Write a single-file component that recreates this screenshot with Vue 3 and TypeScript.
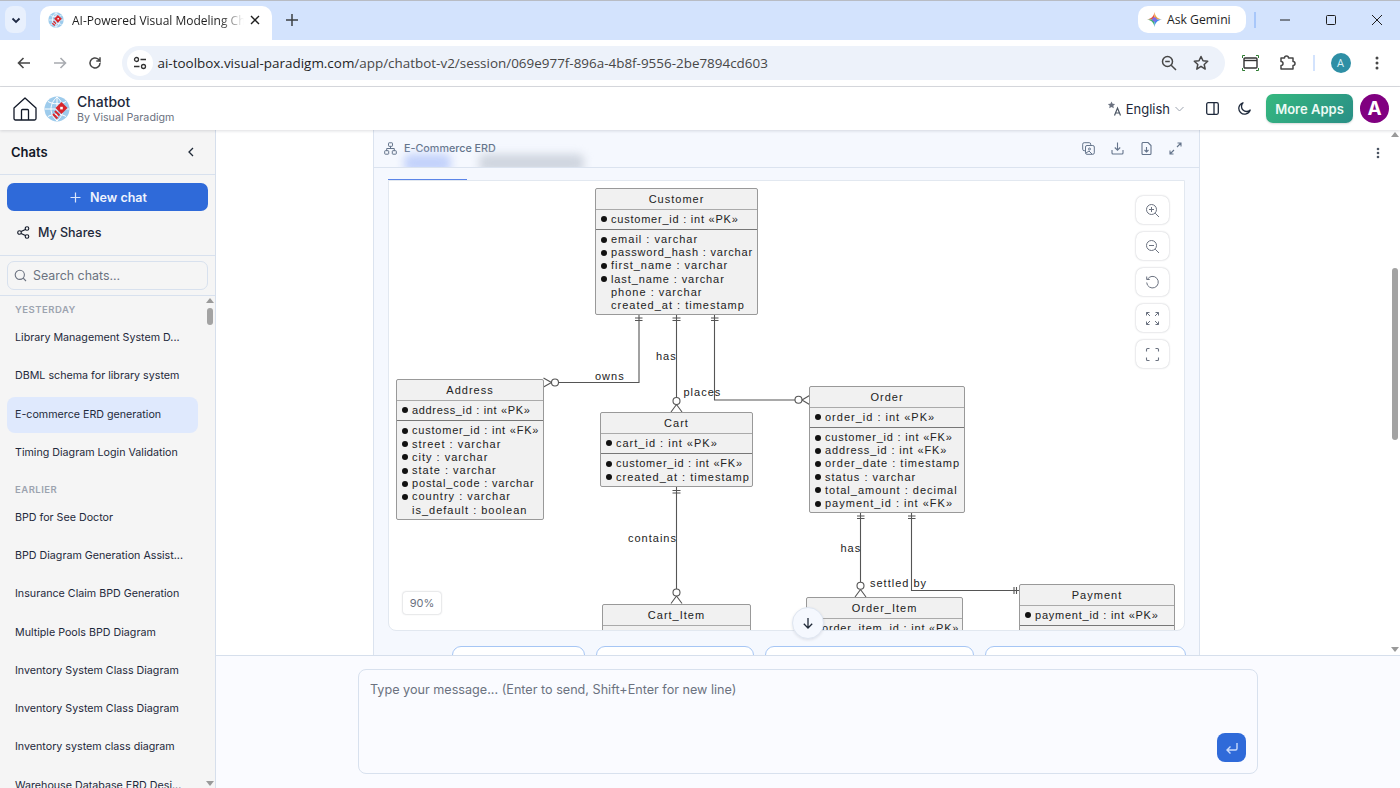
<script setup lang="ts">
type Row = { text: string; key?: boolean; sp?: number };
type Entity = { name: string; x: number; y: number; w: number; pk: string; pkSp?: number; rows: Row[] };

// sp = letter spacing for rows the diagram renderer packed tighter than the rest
const entities: Entity[] = [
  {
    name: "Customer", x: 206, y: 7, w: 163, pk: "customer_id : int «PK»", pkSp: 0.77,
    rows: [
      { text: "email : varchar", key: true },
      { text: "password_hash : varchar", key: true, sp: 0.83 },
      { text: "first_name : varchar", key: true },
      { text: "last_name : varchar", key: true, sp: 0.9 },
      { text: "phone : varchar" },
      { text: "created_at : timestamp" },
    ],
  },
  {
    name: "Address", x: 7, y: 198.4, w: 148, pk: "address_id : int «PK»", pkSp: 0.67,
    rows: [
      { text: "customer_id : int «FK»", key: true, sp: 0.78 },
      { text: "street : varchar", key: true },
      { text: "city : varchar", key: true },
      { text: "state : varchar", key: true },
      { text: "postal_code : varchar", key: true, sp: 0.82 },
      { text: "country : varchar", key: true },
      { text: "is_default : boolean" },
    ],
  },
  {
    name: "Cart", x: 211, y: 231.4, w: 153, pk: "cart_id : int «PK»",
    rows: [
      { text: "customer_id : int «FK»", key: true, sp: 0.76 },
      { text: "created_at : timestamp", key: true },
    ],
  },
  {
    name: "Order", x: 420, y: 205, w: 156, pk: "order_id : int «PK»",
    rows: [
      { text: "customer_id : int «FK»", key: true, sp: 0.8 },
      { text: "address_id : int «FK»", key: true, sp: 0.87 },
      { text: "order_date : timestamp", key: true },
      { text: "status : varchar", key: true },
      { text: "total_amount : decimal", key: true },
      { text: "payment_id : int «FK»", key: true },
    ],
  },
  { name: "Cart_Item", x: 213, y: 423, w: 149, pk: "cart_item_id : int «PK»", rows: [] },
  { name: "Order_Item", x: 417, y: 416, w: 157, pk: "order_item_id : int «PK»", pkSp: 0.8, rows: [] },
  { name: "Payment", x: 630, y: 403, w: 156, pk: "payment_id : int «PK»", pkSp: 0.76, rows: [] },
];

const chats = [
  { label: "YESTERDAY" },
  { title: "Library Management System D..." },
  { title: "DBML schema for library system" },
  { title: "E-commerce ERD generation", active: true },
  { title: "Timing Diagram Login Validation" },
  { label: "EARLIER" },
  { title: "BPD for See Doctor" },
  { title: "BPD Diagram Generation Assist..." },
  { title: "Insurance Claim BPD Generation" },
  { title: "Multiple Pools BPD Diagram" },
  { title: "Inventory System Class Diagram" },
  { title: "Inventory System Class Diagram" },
  { title: "Inventory system class diagram" },
  { title: "Warehouse Database ERD Desi..." },
];

const chipWidths = [133, 158, 209, 201];

function spacing(sp?: number) {
  return sp ? { letterSpacing: sp + "px" } : undefined;
}
</script>

<template>
  <div class="window">
    <div class="tabstrip">
      <button class="tablist">
        <svg width="12" height="12" viewBox="0 0 12 12"><path d="M2.5 4.5 6 8l3.5-3.5" fill="none" stroke="#1f2a44" stroke-width="1.8" /></svg>
      </button>
      <div class="tab">
        <svg class="favicon" width="16" height="16" viewBox="0 0 26 26">
          <circle cx="13" cy="13" r="12.5" fill="#9dcbec" />
          <path d="M1 13h24M13 1v24M4 5.500c5 3 13 3 18 0M4 20.500c5-3 13-3 18 0M13 1C5 8 5 18 13 25M13 1c8 7 8 17 0 24" fill="none" stroke="#fff" stroke-width="1.2" />
          <path d="M16 5l6.500 6-6.500 6.500-6-6.500z" fill="#d8262c" />
          <path d="M15.300 9.700h2.400v2.400h-2.400z" fill="#fff" />
          <path d="M9 15l4 4M7 18l4 4" stroke="#d8262c" stroke-width="2" />
        </svg>
        <span class="tab-title">AI-Powered Visual Modeling Chatbot</span>
        <svg class="tab-close" width="10" height="10" viewBox="0 0 10 10"><path d="M1 1l8 8M9 1 1 9" stroke="#1f1f1f" stroke-width="1.4" /></svg>
      </div>
      <svg class="newtab" width="12" height="12" viewBox="0 0 12 12"><path d="M6 0v12M0 6h12" stroke="#3c4043" stroke-width="1.5" /></svg>
      <div class="strip-space"></div>
      <div class="gemini">
        <svg width="15" height="15" viewBox="0 0 16 16">
          <defs>
            <clipPath id="spark"><path d="M8 0c.6 4.400 3.200 7.200 8 8-4.800.8-7.400 3.600-8 8-.6-4.400-3.200-7.200-8-8 4.800-.8 7.400-3.600 8-8z" /></clipPath>
          </defs>
          <g clip-path="url(#spark)">
            <rect width="8" height="8" fill="#e8503f" />
            <rect x="8" width="8" height="8" fill="#f0a93a" />
            <rect y="8" width="8" height="8" fill="#3fb66b" />
            <rect x="8" y="8" width="8" height="8" fill="#3d8bf0" />
            <circle cx="8" cy="8" r="2.500" fill="#7f6ae8" />
          </g>
        </svg>
        <span>Ask Gemini</span>
      </div>
      <div class="strip-sep"></div>
      <div class="winctl">
        <svg width="12" height="12" viewBox="0 0 12 12"><path d="M1 6h10" stroke="#1f1f1f" stroke-width="1" /></svg>
        <svg width="12" height="12" viewBox="0 0 12 12"><rect x="1.5" y="1.5" width="9" height="9" rx="1" fill="none" stroke="#1f1f1f" stroke-width="1" /></svg>
        <svg width="12" height="12" viewBox="0 0 12 12"><path d="M1 1l10 10M11 1 1 11" stroke="#1f1f1f" stroke-width="1" /></svg>
      </div>
    </div>

    <div class="toolbar">
      <svg class="nav" width="16" height="16" viewBox="0 0 16 16"><path d="M14 8H2.5M7.5 3l-5 5 5 5" fill="none" stroke="#474747" stroke-width="1.6" /></svg>
      <svg class="nav" width="16" height="16" viewBox="0 0 16 16"><path d="M2 8h11.5M8.5 3l5 5-5 5" fill="none" stroke="#a8abb0" stroke-width="1.6" /></svg>
      <svg class="nav" width="16" height="16" viewBox="0 0 16 16"><path d="M13 8a5 5 0 1 1-1.6-3.7L13 6V2.2M13 6H9.3" fill="none" stroke="#474747" stroke-width="1.5" /></svg>
      <div class="omnibox">
        <span class="siteinfo">
          <svg width="14" height="14" viewBox="0 0 14 14"><circle cx="3.5" cy="3.5" r="2" fill="none" stroke="#333" stroke-width="1.3" /><path d="M7.5 3.5H13M1 10.5h5.5" stroke="#333" stroke-width="1.3" /><circle cx="10.5" cy="10.5" r="2" fill="none" stroke="#333" stroke-width="1.3" /></svg>
        </span>
        <span class="url"><span class="host">ai-toolbox.visual-paradigm.com</span>/app/chatbot-v2/session/069e977f-896a-4b8f-9556-2be7894cd603</span>
        <svg class="omni-zoom" width="16" height="16" viewBox="0 0 16 16"><circle cx="6.5" cy="6.5" r="5" fill="none" stroke="#474747" stroke-width="1.5" /><path d="M4.2 6.5h4.6M10.2 10.2 15 15" stroke="#474747" stroke-width="1.5" /></svg>
        <svg class="omni-star" width="16" height="16" viewBox="0 0 16 16"><path d="M8 1.5l2 4.3 4.7.5-3.5 3.2 1 4.6L8 11.3l-4.2 2.8 1-4.6L1.300 6.300l4.700-.5z" fill="none" stroke="#474747" stroke-width="1.5" stroke-linejoin="round" /></svg>
      </div>
      <svg class="capture" width="17" height="16" viewBox="0 0 17 16">
        <path d="M.5 3V.5H3M14 .5h2.500V3M.5 13v2.500H3M14 15.500h2.500V13" fill="none" stroke="#2f7d32" stroke-width="1" />
        <rect x="2" y="3" width="13" height="10" rx="1" fill="none" stroke="#333" stroke-width="1.400" />
        <path d="M2 5.500h13" stroke="#333" stroke-width="1.400" />
      </svg>
      <svg class="puzzle" width="17" height="17" viewBox="0 0 17 17"><path d="M2 4h3.500a2 2 0 0 1 4 0H14v3.500a2 2 0 0 1 0 4V15H2v-3.500a2 2 0 0 0 0-4z" fill="none" stroke="#474747" stroke-width="1.500" stroke-linejoin="round" /></svg>
      <div class="tool-sep"></div>
      <span class="profile">A</span>
      <svg class="chrome-kebab" width="4" height="14" viewBox="0 0 4 14"><circle cx="2" cy="2" r="1.500" fill="#474747" /><circle cx="2" cy="7" r="1.500" fill="#474747" /><circle cx="2" cy="12" r="1.500" fill="#474747" /></svg>
    </div>

    <header class="apphead">
      <svg class="home" width="24" height="24" viewBox="0 0 24 24"><path d="M1 11 12 1l11 10v10.500a1.500 1.500 0 0 1-1.500 1.500h-19A1.500 1.500 0 0 1 1 21.500zM8.500 23V13.500a1 1 0 0 1 1-1h5a1 1 0 0 1 1 1V23" fill="none" stroke="#111827" stroke-width="1.300" stroke-linejoin="round" /></svg>
      <svg class="logo" width="26" height="26" viewBox="0 0 26 26">
        <circle cx="13" cy="13" r="12.500" fill="#9dcbec" />
        <path d="M1 13h24M13 1v24M4 5.500c5 3 13 3 18 0M4 20.500c5-3 13-3 18 0M13 1C5 8 5 18 13 25M13 1c8 7 8 17 0 24" fill="none" stroke="#fff" stroke-width="1" />
        <path d="M17.500 6l6 6-6 6-6-6z" fill="#d8262c" />
        <path d="M16.200 10.800h2.600v2.600h-2.600z" fill="#fff" />
        <path d="M11 15l4.500 4.500M9 18l4.500 4.500" stroke="#d8262c" stroke-width="2" />
      </svg>
      <div class="brand">
        <div class="brand-name">Chatbot</div>
        <div class="brand-sub">By Visual Paradigm</div>
      </div>
      <div class="head-right">
        <svg class="translate" width="15" height="15" viewBox="0 0 15 15">
          <path d="M4.500 .5l1.100 2.300 2.500.3-1.800 1.700.5 2.500-2.300-1.200-2.300 1.200.5-2.500L.900 3.100l2.500-.3z" fill="#6b7280" />
          <path d="M7.500 14.500 10.500 7l3 7.500M8.500 12h4" fill="none" stroke="#4b5563" stroke-width="1.200" />
        </svg>
        <span class="lang">English</span>
        <svg class="lang-chev" width="9" height="6" viewBox="0 0 9 6"><path d="M.5 1l4 4 4-4" fill="none" stroke="#9ca3af" stroke-width="1" /></svg>
        <svg class="panel-ic" width="13" height="13" viewBox="0 0 13 13"><rect x=".7" y=".7" width="11.600" height="11.600" rx="1.500" fill="none" stroke="#1e293b" stroke-width="1.300" /><path d="M8 .7v11.600" stroke="#1e293b" stroke-width="1.300" /></svg>
        <svg class="moon" width="13" height="13" viewBox="0 0 13 13"><path d="M5 .8a5.800 5.800 0 1 0 7.200 7.200A5 5 0 0 1 5 .8z" fill="none" stroke="#1e293b" stroke-width="1.300" stroke-linejoin="round" /></svg>
        <button class="more-apps">More Apps</button>
        <span class="avatar">A</span>
      </div>
    </header>

    <div class="main">
      <aside class="sidebar">
        <div class="side-head">
          <span>Chats</span>
          <svg width="8" height="10" viewBox="0 0 8 10"><path d="M6 1 2 5l4 4" fill="none" stroke="#1f2937" stroke-width="1.300" /></svg>
        </div>
        <div class="side-actions">
          <button class="new-chat">
            <svg width="11" height="11" viewBox="0 0 11 11"><path d="M5.500 .5v10M.5 5.500h10" stroke="#dbe6fb" stroke-width="1.200" /></svg>
            <span>New chat</span>
          </button>
          <div class="shares">
            <svg width="13" height="13" viewBox="0 0 13 13" fill="none" stroke="#111827" stroke-width="1.100"><circle cx="2.500" cy="6.500" r="1.800" /><circle cx="10" cy="2.500" r="1.800" /><circle cx="10" cy="10.500" r="1.800" /><path d="M4.100 5.600 8.400 3.400M4.100 7.400l4.300 2.200" /></svg>
            <span>My Shares</span>
          </div>
        </div>
        <div class="side-search">
          <div class="search-box">
            <svg width="13" height="13" viewBox="0 0 13 13" fill="none" stroke="#6b7280" stroke-width="1.100"><circle cx="5.800" cy="5.800" r="4.600" /><path d="M9.200 9.200 12 12" /></svg>
            <span>Search chats...</span>
          </div>
        </div>
        <div class="side-list">
          <div class="list-body">
            <template v-for="c in chats" :key="(c.label ?? '') + (c.title ?? '')">
              <div v-if="c.label" class="group-label">{{ c.label }}</div>
              <div v-else class="chat-item" :class="{ active: c.active }">{{ c.title }}</div>
            </template>
          </div>
          <div class="scrollbar small">
            <span class="arrow up"></span>
            <span class="thumb"></span>
            <span class="arrow down"></span>
          </div>
        </div>
      </aside>

      <section class="chat">
        <div class="messages">
          <div class="card">
            <div class="card-head">
              <svg width="13" height="13" viewBox="0 0 13 13" fill="none" stroke="#64748b" stroke-width="1"><rect x="4.500" y=".8" width="4" height="3.500" rx=".6" /><rect x=".7" y="8.700" width="4" height="3.500" rx=".6" /><rect x="8.300" y="8.700" width="4" height="3.500" rx=".6" /><path d="M6.500 4.300v2.200M2.700 8.700V6.500h7.600v2.200" /></svg>
              <span class="card-title">E-Commerce ERD</span>
              <div class="card-tools">
                <svg width="13" height="13" viewBox="0 0 13 13" fill="none" stroke="#64748b" stroke-width="1"><rect x=".7" y=".7" width="8" height="8" rx="1.500" /><rect x="3.500" y="3.500" width="8.800" height="8.800" rx="1.500" fill="#f5f8fe" /><circle cx="7.500" cy="7" r="1" /><path d="M4 11l3-2 3 3" /></svg>
                <svg width="13" height="13" viewBox="0 0 13 13" fill="none" stroke="#64748b" stroke-width="1.100"><path d="M6.500 .5v7.500M3.800 5.500l2.700 2.700 2.700-2.700M1 8v3a1 1 0 0 0 1 1h9a1 1 0 0 0 1-1V8" /></svg>
                <svg width="13" height="13" viewBox="0 0 13 13" fill="none" stroke="#64748b" stroke-width="1.100"><path d="M2 1.500a1 1 0 0 1 1-1h5l3 3v8a1 1 0 0 1-1 1H3a1 1 0 0 1-1-1zM6.500 5v5M4.500 8l2 2 2-2" /></svg>
                <svg width="13" height="13" viewBox="0 0 13 13" fill="none" stroke="#64748b" stroke-width="1.100"><path d="M8 5l4-4M8.500 1H12v3.500M5 8l-4 4M1 8.500V12h3.500" /></svg>
              </div>
              <span class="blur-tab one"></span>
              <span class="blur-tab two"></span>
            </div>
            <div class="card-body">
              <div class="tabs-line"><span class="tab-active"></span></div>
              <div class="canvas">
                <svg class="wires" width="795" height="449" viewBox="389 181 795 449">
                  <g fill="none" stroke="#555" stroke-width="1.100">
                    <path d="M639 314v68.500H558.500" />
                    <path d="M635 318h7.500M635 320.500h7.500" />
                    <circle cx="555" cy="382.500" r="3.500" fill="#fff" />
                    <path d="M551.500 382.500 543.500 378M551.500 382.500l-8 4.500" />

                    <path d="M676.500 314v83.500" />
                    <path d="M672.500 318h8M672.500 320.500h8" />
                    <circle cx="676.500" cy="401" r="3.500" fill="#fff" />
                    <path d="M676.500 404.500 671 412M676.500 404.500 682 412" />

                    <path d="M714.500 314v86h81" />
                    <path d="M711 318h7.500M711 320.500h7.500" />
                    <circle cx="798.500" cy="399.800" r="3.500" fill="#fff" />
                    <path d="M802 400l7.500-4.500M802 400l7.500 4.500" />

                    <path d="M676.500 487v102" />
                    <path d="M672.500 490.500h8M672.500 493h8" />
                    <circle cx="676.500" cy="592.500" r="3.500" fill="#fff" />
                    <path d="M676.500 596 671 603.500M676.500 596l5.500 7.500" />

                    <path d="M860.500 513v69" />
                    <path d="M857 516h7.500M857 518.500h7.500" />
                    <circle cx="860.500" cy="585.700" r="3.500" fill="#fff" />
                    <path d="M860.500 589.500 855 597M860.500 589.500l5.500 7.500" />

                    <path d="M911.500 513v77.500H1019" />
                    <path d="M908 516h7.500M908 518.500h7.500" />
                    <path d="M1014 587v7M1016.500 587v7" />
                  </g>
                  <g class="wire-labels">
                    <text x="595" y="379.500">owns</text>
                    <text x="656" y="359.500">has</text>
                    <text x="683.500" y="395.500">places</text>
                    <text x="628" y="541.500">contains</text>
                    <text x="840.500" y="552">has</text>
                    <text x="870" y="586.500">settled by</text>
                  </g>
                </svg>

                <div
                  v-for="e in entities"
                  :key="e.name"
                  class="entity"
                  :style="{ left: e.x + 'px', top: e.y + 'px', width: e.w + 'px' }"
                >
                  <div class="ent-title">{{ e.name }}</div>
                  <div class="ent-pk"><i class="dot"></i><span :style="spacing(e.pkSp)">{{ e.pk }}</span></div>
                  <div class="ent-rows">
                    <div v-for="r in e.rows" :key="r.text" class="ent-row">
                      <i class="dot" :class="{ none: !r.key }"></i><span :style="spacing(r.sp)">{{ r.text }}</span>
                    </div>
                  </div>
                </div>

                <div class="zoom-tools">
                  <button>
                    <svg width="15" height="15" viewBox="0 0 15 15" fill="none" stroke="#6b7280" stroke-width="1"><circle cx="6.500" cy="6.500" r="5" /><path d="M4 6.500h5M6.500 4v5M10.200 10.200 14 14" /></svg>
                  </button>
                  <button>
                    <svg width="15" height="15" viewBox="0 0 15 15" fill="none" stroke="#6b7280" stroke-width="1"><circle cx="6.500" cy="6.500" r="5" /><path d="M4 6.500h5M10.200 10.200 14 14" /></svg>
                  </button>
                  <button>
                    <svg width="15" height="15" viewBox="0 0 15 15" fill="none" stroke="#6b7280" stroke-width="1"><path d="M2.500 4.200A5.800 5.800 0 1 1 1.700 7.500M1.700 1.500v3h3" /></svg>
                  </button>
                  <button>
                    <svg width="15" height="15" viewBox="0 0 15 15" fill="none" stroke="#6b7280" stroke-width="1"><path d="M1.500 1.500l3.500 3.500M1.500 4.500v-3h3M13.500 1.500 10 5M10.500 1.500h3v3M1.500 13.500 5 10M1.500 10.500v3h3M13.500 13.500 10 10M13.500 10.500v3h-3" /></svg>
                  </button>
                  <button>
                    <svg width="15" height="15" viewBox="0 0 15 15" fill="none" stroke="#6b7280" stroke-width="1.100"><path d="M1.500 4.500v-2a1 1 0 0 1 1-1h2M10.500 1.500h2a1 1 0 0 1 1 1v2M13.500 10.500v2a1 1 0 0 1-1 1h-2M4.500 13.500h-2a1 1 0 0 1-1-1v-2" /></svg>
                  </button>
                </div>
                <div class="zoom-level">90%</div>
              </div>
              <div class="chips">
                <span v-for="w in chipWidths" :key="w" class="chip" :style="{ width: w + 'px' }"></span>
              </div>
            </div>
          </div>
          <div class="msg-side">
            <svg width="4" height="12" viewBox="0 0 4 12"><circle cx="2" cy="2" r="1.300" fill="#4b5563" /><circle cx="2" cy="6" r="1.300" fill="#4b5563" /><circle cx="2" cy="10" r="1.300" fill="#4b5563" /></svg>
          </div>
          <div class="scrollbar large">
            <span class="arrow up"></span>
            <span class="thumb"></span>
            <span class="arrow down"></span>
          </div>
          <button class="to-bottom">
            <svg width="12" height="12" viewBox="0 0 12 12" fill="none" stroke="#1f2937" stroke-width="1.300"><path d="M6 1v10M1.800 6.800 6 11l4.200-4.200" /></svg>
          </button>
        </div>
        <div class="composer">
          <div class="input-box">
            <span class="placeholder">Type your message... (Enter to send, Shift+Enter for new line)</span>
            <button class="send">
              <svg width="14" height="14" viewBox="0 0 14 14" fill="none" stroke="#c9dafb" stroke-width="1.400"><path d="M12 2v5.500a1.500 1.500 0 0 1-1.500 1.500H2M5.500 5.500 2 9l3.500 3.500" /></svg>
            </button>
          </div>
        </div>
      </section>
    </div>
  </div>
</template>

<style>
html, body {
  margin: 0;
  background: #fff;
  overflow: hidden;
}
</style>

<style scoped>
.window {
  width: 1400px;
  height: 788px;
  display: flex;
  flex-direction: column;
  overflow: hidden;
  font-family: Inter, "Liberation Sans", sans-serif;
  color: #111827;
}
button {
  border: none;
  padding: 0;
  font: inherit;
}

/* browser chrome */
.tabstrip {
  height: 39px;
  flex: none;
  background: #d3e3fd;
  border-top: 1px solid #b8bcc4;
  display: flex;
  align-items: flex-end;
  font-family: "Open Sans", "Liberation Sans", sans-serif;
}
.tablist {
  width: 21px;
  height: 27px;
  margin: 0 0 7px 5px;
  border-radius: 8px;
  background: #e8f0fd;
  display: flex;
  align-items: center;
  justify-content: center;
}
.tab {
  margin-left: 14px;
  width: 232px;
  height: 34px;
  background: #fff;
  border-radius: 10px 10px 0 0;
  display: flex;
  align-items: center;
  padding: 0 12px 6px 8px;
  box-sizing: border-box;
  font-size: 12px;
  color: #1f1f1f;
}
.favicon {
  flex: none;
}
.tab-title {
  margin-left: 8px;
  flex: 1;
  overflow: hidden;
  white-space: nowrap;
  -webkit-mask-image: linear-gradient(90deg, #000 86%, transparent);
  mask-image: linear-gradient(90deg, #000 86%, transparent);
}
.tab-close {
  flex: none;
  margin-left: 6px;
}
.newtab {
  margin: 0 0 14px 14px;
}
.strip-space {
  flex: 1;
}
.gemini {
  width: 108px;
  height: 27px;
  margin-bottom: 7px;
  border-radius: 10px;
  background: #fff;
  display: flex;
  align-items: center;
  padding-left: 9px;
  box-sizing: border-box;
  gap: 5px;
  font-size: 12.200px;
  color: #1f1f1f;
}
.strip-sep {
  width: 2px;
  height: 16px;
  margin: 0 0 12px 8px;
  background: #a8c7fa;
}
.winctl {
  width: 144px;
  margin-bottom: 14px;
  padding: 0 17px 0 23px;
  box-sizing: border-box;
  display: flex;
  justify-content: space-between;
}
.toolbar {
  height: 47px;
  flex: none;
  background: #fff;
  border-bottom: 1px solid #dadce0;
  box-sizing: border-box;
  display: flex;
  align-items: center;
  padding-left: 16px;
  padding-bottom: 1px;
}
.nav {
  margin-right: 19.500px;
  flex: none;
}
.omnibox {
  width: 1103px;
  height: 34px;
  margin-left: -1px;
  border-radius: 17px;
  background: #edf2fa;
  display: flex;
  align-items: center;
  padding-left: 5px;
  box-sizing: border-box;
}
.siteinfo {
  width: 26px;
  height: 26px;
  border-radius: 50%;
  background: #fff;
  display: flex;
  align-items: center;
  justify-content: center;
  flex: none;
}
.url {
  margin-left: 5px;
  flex: 1;
  font-family: "Open Sans", "Liberation Sans", sans-serif;
  font-size: 13.450px;
  color: #474747;
  white-space: nowrap;
}
.host {
  color: #1f1f1f;
}
.omni-zoom {
  margin-right: 16px;
}
.omni-star {
  margin-right: 16px;
}
.capture {
  margin-left: 17px;
}
.puzzle {
  margin-left: 20px;
}
.tool-sep {
  width: 2px;
  height: 16px;
  margin-left: 17px;
  background: #d3e3fd;
}
.profile {
  width: 20px;
  height: 20px;
  margin-left: 16px;
  border-radius: 50%;
  background: #2e8fa5;
  color: #d9f0f5;
  font-size: 11px;
  display: flex;
  align-items: center;
  justify-content: center;
  font-family: "Open Sans", sans-serif;
}
.chrome-kebab {
  margin-left: 24px;
}

/* app header */
.apphead {
  height: 43px;
  flex: none;
  background: #fff;
  display: flex;
  align-items: center;
  padding-left: 13px;
  box-sizing: border-box;
  box-shadow: 0 1px 3px rgba(15, 23, 42, 0.14);
  position: relative;
  z-index: 2;
}
.logo {
  margin-left: 7px;
}
.brand {
  margin-left: 7px;
  padding-top: 1px;
  line-height: 1;
}
.brand-name {
  font-size: 14px;
  font-weight: 500;
  color: #1e293b;
}
.brand-sub {
  margin-top: 4px;
  font-size: 10.700px;
  color: #6b7280;
}
.head-right {
  margin-left: auto;
  display: flex;
  align-items: center;
  padding-right: 11px;
}
.lang {
  margin-left: 4px;
  font-size: 13px;
  color: #1e293b;
}
.lang-chev {
  margin-left: 5px;
}
.panel-ic {
  margin-left: 22px;
}
.moon {
  margin-left: 19px;
}
.more-apps {
  width: 87px;
  height: 29px;
  margin-left: 15px;
  border-radius: 7px;
  background: linear-gradient(135deg, #35b87f, #2a8f86);
  color: #eefaf5;
  font-size: 13px;
  font-weight: 600;
  box-shadow: 0 1px 2px rgba(0, 0, 0, 0.15);
}
.avatar {
  width: 29px;
  height: 29px;
  margin-left: 7px;
  border-radius: 50%;
  background: #800080;
  color: #fff;
  font-size: 19px;
  font-weight: 700;
  display: flex;
  align-items: center;
  justify-content: center;
}

/* layout */
.main {
  flex: 1;
  min-height: 0;
  display: flex;
}

/* sidebar */
.sidebar {
  width: 216px;
  flex: none;
  background: #f5f5f5;
  border-right: 1px solid #d6dfec;
  box-sizing: border-box;
  display: flex;
  flex-direction: column;
}
.side-head {
  height: 45px;
  flex: none;
  border-bottom: 1px solid #d8e1ee;
  box-sizing: border-box;
  display: flex;
  align-items: center;
  justify-content: space-between;
  padding: 0 20px 0 11px;
  font-size: 13px;
  font-weight: 600;
  color: #111827;
}
.side-actions {
  height: 81px;
  flex: none;
  border-bottom: 1px solid #d8e1ee;
  box-sizing: border-box;
  padding: 8px 7px 0;
}
.new-chat {
  width: 201px;
  height: 28px;
  padding-left: 2px;
  border-radius: 7px;
  background: #2f6ad9;
  color: #eef3fd;
  font-size: 12.500px;
  font-weight: 600;
  display: flex;
  align-items: center;
  justify-content: center;
  gap: 9px;
}
.shares {
  height: 42px;
  display: flex;
  align-items: center;
  gap: 8px;
  padding-left: 10px;
  font-size: 12.500px;
  font-weight: 500;
  color: #1e293b;
}
.side-search {
  height: 40px;
  flex: none;
  border-bottom: 1px solid #d8e1ee;
  box-sizing: border-box;
  padding: 5px 7px 0;
}
.search-box {
  width: 201px;
  height: 29px;
  border: 1px solid #d8e1ee;
  border-radius: 7px;
  box-sizing: border-box;
  display: flex;
  align-items: center;
  gap: 6px;
  padding-left: 6px;
  font-size: 12.400px;
  color: #6b7280;
}
.side-list {
  flex: 1;
  min-height: 0;
  display: flex;
  overflow: hidden;
}
.list-body {
  width: 205px;
  padding: 7px 0 0 7px;
  box-sizing: border-box;
}
.group-label {
  height: 14px;
  margin: 0 0 3px 8px;
  line-height: 14px;
  font-size: 9.500px;
  font-weight: 600;
  letter-spacing: 0.5px;
  color: #9ca3af;
}
.chat-item + .group-label {
  margin-top: 12px;
}
.chat-item {
  width: 191px;
  height: 36px;
  margin-bottom: 2.250px;
  padding-left: 8px;
  box-sizing: border-box;
  border-radius: 8px;
  line-height: 36px;
  font-size: 10.700px;
  color: #1e293b;
  white-space: nowrap;
}
.chat-item.active {
  background: #dfe9fd;
}

/* scrollbars */
.scrollbar {
  width: 10px;
  flex: none;
  display: flex;
  flex-direction: column;
  align-items: center;
  position: relative;
}
.arrow {
  position: absolute;
  width: 0;
  height: 0;
  border-left: 4.500px solid transparent;
  border-right: 4.500px solid transparent;
}
.arrow.up {
  top: 2px;
  border-bottom: 5px solid #9a9a9a;
}
.arrow.down {
  bottom: 2px;
  border-top: 5px solid #9a9a9a;
}
.thumb {
  position: absolute;
  width: 6px;
  border-radius: 3px;
  background: #a3a3a3;
}
.scrollbar.small .thumb {
  top: 12px;
  height: 17px;
}
.scrollbar.large .thumb {
  top: 138px;
  height: 172px;
}
.scrollbar.large .arrow.down {
  bottom: 3px;
}

/* chat */
.chat {
  flex: 1;
  min-width: 0;
  display: flex;
  flex-direction: column;
  background: #fff;
}
.messages {
  height: 525px;
  flex: none;
  display: flex;
  padding-left: 157px;
  position: relative;
  overflow: hidden;
}
.card {
  width: 827px;
  flex: none;
  border: solid #dbe3ef;
  border-width: 0 1px;
  box-sizing: border-box;
  background: #f5f8fe;
}
.card-head {
  height: 38px;
  border-bottom: 1px solid #dbe3ef;
  box-sizing: border-box;
  display: flex;
  align-items: center;
  padding: 0 17px 0 10px;
  position: relative;
  overflow: hidden;
}
.card-title {
  margin-left: 7px;
  font-size: 10.750px;
  font-weight: 500;
  color: #64748b;
}
.card-tools {
  margin-left: auto;
  display: flex;
  gap: 16px;
}
.blur-tab {
  position: absolute;
  top: 24px;
  height: 18px;
  border-radius: 6px;
  filter: blur(4px);
}
.blur-tab.one {
  left: 30px;
  width: 47px;
  background: #c3d2fb;
}
.blur-tab.two {
  left: 105px;
  width: 105px;
  background: #d0d6e0;
}
.card-body {
  padding: 0 14px;
}
.tabs-line {
  height: 12px;
  position: relative;
}
.tab-active {
  position: absolute;
  left: 0;
  bottom: 0;
  width: 79px;
  height: 1px;
  background: #5b85e8;
}
.canvas {
  width: 797px;
  height: 451px;
  border: 1px solid #e2e8f0;
  border-radius: 0 0 8px 8px;
  box-sizing: border-box;
  background: #fff;
  position: relative;
  overflow: hidden;
}
.wires {
  position: absolute;
  left: 0;
  top: 0;
}
.wire-labels {
  font-family: "Liberation Sans", Arial, sans-serif;
  font-size: 11px;
  letter-spacing: 1px;
  fill: #222;
}
.entity {
  position: absolute;
  box-sizing: border-box;
  background: #f1f1f1;
  border: 1px solid #999;
  border-radius: 2px;
  font-family: "Liberation Sans", Arial, sans-serif;
  font-size: 11px;
  letter-spacing: 1px;
  color: #222;
  white-space: nowrap;
}
.ent-title {
  height: 20px;
  line-height: 20px;
  text-align: center;
  border-bottom: 1px solid #aaa;
}
.ent-pk {
  height: 17px;
  padding-bottom: 2px;
  display: flex;
  align-items: center;
  padding-left: 5px;
  border-bottom: 1px solid #777;
}
.ent-rows {
  padding: 3px 0 2px 5px;
}
.ent-row {
  height: 13.200px;
  line-height: 13.200px;
  display: flex;
  align-items: center;
}
.dot {
  width: 6px;
  height: 6px;
  margin-right: 4px;
  flex: none;
  border-radius: 50%;
  background: #111;
}
.dot.none {
  background: transparent;
}
.zoom-tools {
  position: absolute;
  top: 15px;
  right: 15px;
  display: flex;
  flex-direction: column;
  gap: 8px;
}
.zoom-tools button {
  width: 33px;
  height: 28px;
  border-radius: 7px;
  background: #fff;
  box-shadow: 0 0 2px rgba(15, 23, 42, 0.3);
  display: flex;
  align-items: center;
  justify-content: center;
}
.zoom-level {
  position: absolute;
  left: 14px;
  top: 411px;
  width: 38px;
  height: 22px;
  border-radius: 3px;
  background: #fff;
  box-shadow: 0 0 2px rgba(15, 23, 42, 0.35);
  font-size: 11px;
  line-height: 22px;
  text-align: center;
  color: #6b7280;
}
.chips {
  display: flex;
  gap: 11px;
  padding: 15px 0 0 64px;
}
.chip {
  height: 20px;
  flex: none;
  box-sizing: border-box;
  border: 1px solid #a6c6f5;
  border-radius: 9px;
  background: #fff;
}
.msg-side {
  width: 190px;
  padding-top: 17px;
  display: flex;
  justify-content: flex-end;
  padding-right: 10px;
  box-sizing: border-box;
  flex: none;
}
.to-bottom {
  position: absolute;
  left: 576px;
  top: 477px;
  width: 32px;
  height: 32px;
  border-radius: 50%;
  background: #f5f8fe;
  border: 1px solid #dfe6f1;
  box-sizing: border-box;
  box-shadow: 0 1px 3px rgba(15, 23, 42, 0.1);
  display: flex;
  align-items: center;
  justify-content: center;
}
.composer {
  flex: 1;
  background: #fafbff;
  border-top: 1px solid #d6dfec;
  padding-top: 13px;
  box-sizing: border-box;
}
.input-box {
  width: 900px;
  height: 105px;
  margin: 0 auto;
  border: 1px solid #d8e1ee;
  border-radius: 8px;
  box-sizing: border-box;
  position: relative;
  padding: 12px 11px;
  font-size: 12.640px;
  color: #6b7280;
}
.send {
  position: absolute;
  right: 11px;
  bottom: 11px;
  width: 29px;
  height: 29px;
  border-radius: 8px;
  background: #2f6ad9;
  display: flex;
  align-items: center;
  justify-content: center;
}
</style>
